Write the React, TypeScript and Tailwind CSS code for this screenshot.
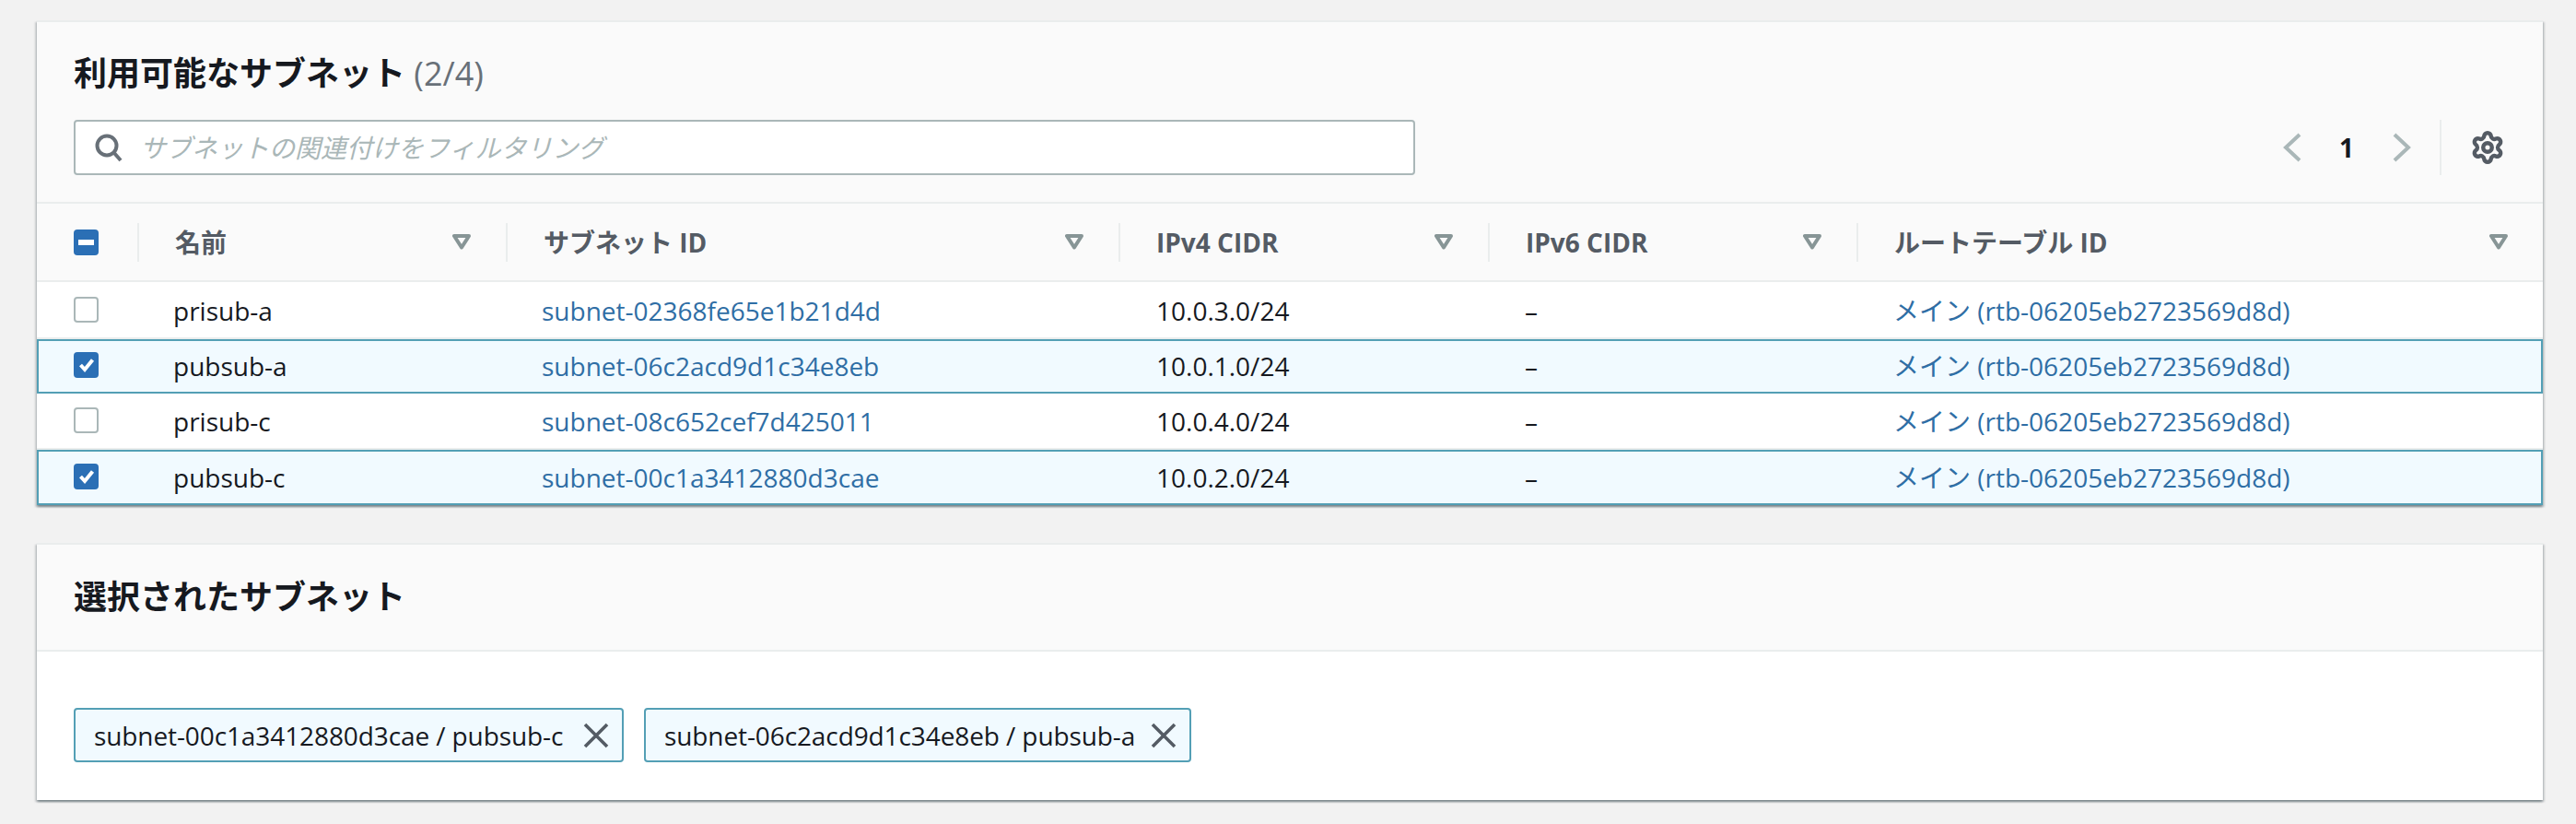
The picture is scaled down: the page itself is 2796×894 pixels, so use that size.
import { Settings } from "lucide-react";

const rows = [
  { name: "prisub-a", id: "subnet-02368fe65e1b21d4d", cidr: "10.0.3.0/24", selected: false, h: "h-[62px]" },
  { name: "pubsub-a", id: "subnet-06c2acd9d1c34e8eb", cidr: "10.0.1.0/24", selected: true, h: "h-[59px]" },
  { name: "prisub-c", id: "subnet-08c652cef7d425011", cidr: "10.0.4.0/24", selected: false, h: "h-[61px]" },
  { name: "pubsub-c", id: "subnet-00c1a3412880d3cae", cidr: "10.0.2.0/24", selected: true, h: "h-[60px]" },
];

const columns = [
  { label: "名前", w: "w-[400px]" },
  { label: "サブネット ID", w: "w-[665px]" },
  { label: "IPv4 CIDR", w: "w-[401px]" },
  { label: "IPv6 CIDR", w: "w-[400px]" },
  { label: "ルートテーブル ID", w: "flex-1" },
];

const chips = [
  { label: "subnet-00c1a3412880d3cae / pubsub-c", w: "w-[597px]" },
  { label: "subnet-06c2acd9d1c34e8eb / pubsub-a", w: "w-[594px]" },
];

function FilterCaret() {
  return (
    <svg width="20" height="17" viewBox="0 0 20 17" className="shrink-0">
      <path d="M2 2h16L10 14.5z" fill="none" stroke="#879596" strokeWidth="4" strokeLinejoin="round" />
    </svg>
  );
}

function Chevron({ dir }: { dir: "left" | "right" }) {
  return (
    <svg width="20" height="32" viewBox="0 0 20 32" className="shrink-0">
      <path
        d={dir === "left" ? "M18 2L3 16l15 14" : "M2 2l15 14L2 30"}
        fill="none"
        stroke="#aab7b8"
        strokeWidth="4"
      />
    </svg>
  );
}

function Checkbox({ state }: { state: "off" | "on" | "mixed" }) {
  if (state === "off") {
    return <span className="block h-[28px] w-[27px] rounded-[4px] border-2 border-[#aab7b8] bg-white" />;
  }
  return (
    <span className="flex h-[28px] w-[27px] items-center justify-center rounded-[4px] bg-[#2b6fb5]">
      {state === "on" ? (
        <svg width="20" height="20" viewBox="0 0 20 20">
          <path d="M3.5 10l4.5 5 8.5-10.5" fill="none" stroke="white" strokeWidth="4" />
        </svg>
      ) : (
        <span className="block h-[6px] w-[17px] bg-white" />
      )}
    </span>
  );
}

function Card({ children, className = "" }: { children: React.ReactNode; className?: string }) {
  return (
    <section
      className={`border-t-2 border-[#eaeded] bg-white shadow-[0_2px_2px_rgba(0,28,36,0.3),2px_2px_2px_rgba(0,28,36,0.15),-2px_2px_2px_rgba(0,28,36,0.15)] ${className}`}
    >
      {children}
    </section>
  );
}

export default function App() {
  return (
    <main className="min-h-screen bg-[#f2f2f2] pl-[40px] pr-[36px] pt-[22px] font-['Open_Sans','Noto_Sans_CJK_JP',sans-serif] text-[28px] text-[#16191f]">
      <Card>
        <div className="border-b-2 border-[#eaeded] bg-[#fafafa] pb-[29px] pl-[40px] pt-[34px]">
          <h2 className="h-[44px] text-[36px] font-bold leading-[44px]">
            利用可能なサブネット <span className="font-normal text-[#687078]">(2/4)</span>
          </h2>
          <div className="mt-[28px] flex h-[60px] items-center">
            <div className="flex h-[60px] w-[1456px] items-center rounded-[4px] border-2 border-[#aab7b8] bg-white pl-[20px]">
              <svg width="32" height="32" viewBox="0 0 32 32" className="shrink-0">
                <circle cx="14" cy="14" r="10.5" fill="none" stroke="#687078" strokeWidth="4" />
                <path d="M21.5 21.5L29 30" stroke="#687078" strokeWidth="4" />
              </svg>
              <span className="ml-[18px] italic text-[#aab7b8]">サブネットの関連付けをフィルタリング</span>
            </div>
            <div className="ml-auto flex items-center">
              <Chevron dir="left" />
              <span className="ml-[41px] w-[16px] font-bold">1</span>
              <span className="ml-[42px] flex">
                <Chevron dir="right" />
              </span>
              <span className="ml-[31px] h-[60px] w-[2px] bg-[#eaeded]" />
              <Settings size={38} strokeWidth={2.8} className="ml-[31px] mr-[41px] text-[#545b64]" />
            </div>
          </div>
        </div>

        <div className="flex h-[85px] items-center border-b-2 border-[#eaeded] bg-[#fafafa]">
          <div className="flex w-[109px] pl-[40px]">
            <Checkbox state="mixed" />
          </div>
          {columns.map((c) => (
            <div key={c.label} className={`flex h-[42px] items-center border-l-2 border-[#eaeded] pl-[39px] pr-[38px] ${c.w}`}>
              <span className="font-bold text-[#545b64]">{c.label}</span>
              <span className="ml-auto flex">
                <FilterCaret />
              </span>
            </div>
          ))}
        </div>

        {rows.map((r) => (
          <div
            key={r.id}
            className={`flex items-center border-y-2 ${r.h} ${
              r.selected ? "border-x-2 border-[#539fb5] bg-[#f1faff]" : "border-t-transparent border-b-[#eaeded] bg-white"
            }`}
          >
            <div className={`mb-[3px] flex ${r.selected ? "w-[107px] pl-[38px]" : "w-[109px] pl-[40px]"}`}>
              <Checkbox state={r.selected ? "on" : "off"} />
            </div>
            <div className="mb-[1px] w-[400px] pl-[39px]">{r.name}</div>
            <div className="mb-[1px] w-[666px] pl-[39px] text-[#2f6ea5]">{r.id}</div>
            <div className="mb-[1px] w-[400px] pl-[40px]">{r.cidr}</div>
            <div className="mb-[1px] w-[400px] pl-[40px]">–</div>
            <div className="mb-[1px] flex-1 pl-[40px] text-[#2f6ea5]">メイン (rtb-06205eb2723569d8d)</div>
          </div>
        ))}
      </Card>

      <Card className="mt-[41px]">
        <div className="flex h-[116px] items-center border-b-2 border-[#eaeded] bg-[#fafafa] pl-[40px]">
          <h2 className="text-[36px] font-bold">選択されたサブネット</h2>
        </div>
        <div className="flex gap-[22px] pb-[41px] pl-[40px] pt-[61px]">
          {chips.map((c) => (
            <div key={c.label} className={`flex h-[59px] items-center rounded-[4px] border-2 border-[#539fb5] bg-[#f1faff] pl-[20px] pr-[14px] ${c.w}`}>
              <span className="tracking-[-0.1px]">{c.label}</span>
              <svg width="28" height="28" viewBox="0 0 28 28" className="ml-auto shrink-0">
                <path d="M2 2l24 24M26 2L2 26" fill="none" stroke="#545b64" strokeWidth="3.6" />
              </svg>
            </div>
          ))}
        </div>
      </Card>
    </main>
  );
}
